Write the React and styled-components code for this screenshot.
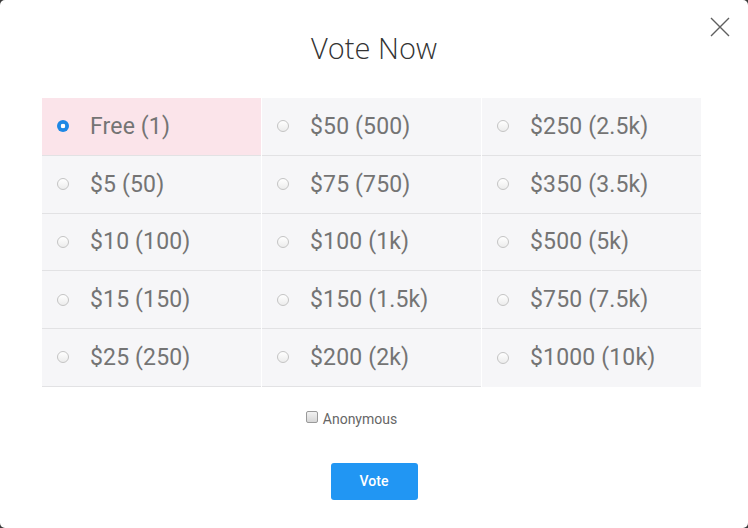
import React, { useState } from "react";
import styled, { createGlobalStyle } from "styled-components";

const GlobalStyle = createGlobalStyle`
  html, body {
    margin: 0;
    padding: 0;
    background: #3a3a3a;
  }
  * {
    box-sizing: border-box;
  }
`;

const Modal = styled.div`
  position: relative;
  width: 748px;
  height: 528px;
  background: #fff;
  border-radius: 5px;
  padding: 30px 47px 0 42px;
  font-family: Roboto, "Liberation Sans", sans-serif;
`;

const Title = styled.h2`
  margin: 0;
  height: 68px;
  text-align: center;
  font-family: "Open Sans", "Liberation Sans", sans-serif;
  font-weight: 300;
  font-size: 29px;
  line-height: 36px;
  color: #333;
  padding-left: 5px;
`;

const Close = styled.button`
  position: absolute;
  top: 16px;
  right: 17px;
  width: 22px;
  height: 22px;
  padding: 0;
  border: 0;
  background: none;
  cursor: pointer;
`;

const Grid = styled.div`
  display: grid;
  grid-template-columns: repeat(3, 219px);
  column-gap: 1px;
`;

const Column = styled.div`
  display: flex;
  flex-direction: column;
`;

const Option = styled.label`
  display: flex;
  align-items: center;
  height: 57.75px;
  padding-left: 15px;
  background: ${(p) => (p.$active ? "#fbe4ea" : "#f6f6f8")};
  border-bottom: ${(p) => (p.$last ? "0" : "1px solid #e2e2e4")};
  cursor: pointer;
`;

const Radio = styled.span`
  width: 12px;
  height: 12px;
  border-radius: 50%;
  flex: none;
  border: ${(p) => (p.$on ? "0" : "1px solid #c4c4c4")};
  background: ${(p) =>
    p.$on
      ? "radial-gradient(circle, #fff 0 2px, #1e88e5 2.6px)"
      : "linear-gradient(#fff, #ececec)"};
`;

const OptionText = styled.span`
  margin-left: 21px;
  font-size: 23px;
  color: #747474;
  letter-spacing: 0.15px;
`;

const AnonRow = styled.label`
  display: flex;
  align-items: center;
  justify-content: center;
  margin-top: 24px;
  padding-right: 40px;
  font-size: 14px;
  color: #666;
  cursor: pointer;
`;

const Check = styled.span`
  width: 12px;
  height: 12px;
  border: 1px solid #9a9a9a;
  border-radius: 2px;
  background: linear-gradient(#f2f2f2, #d6d6d6);
  margin-right: 5px;
  margin-top: -3px;
`;

const Footer = styled.div`
  display: flex;
  justify-content: center;
  margin-top: 36px;
  padding-left: 5px;
`;

const VoteButton = styled.button`
  width: 87px;
  height: 37px;
  border: 0;
  border-radius: 3px;
  background: #2196f3;
  color: #fff;
  font-family: Roboto, "Liberation Sans", sans-serif;
  font-weight: 500;
  font-size: 14px;
  cursor: pointer;
`;

const columns = [
  ["Free (1)", "$5 (50)", "$10 (100)", "$15 (150)", "$25 (250)"],
  ["$50 (500)", "$75 (750)", "$100 (1k)", "$150 (1.5k)", "$200 (2k)"],
  ["$250 (2.5k)", "$350 (3.5k)", "$500 (5k)", "$750 (7.5k)", "$1000 (10k)"],
];

const App = () => {
  const [choice, setChoice] = useState("Free (1)");
  const [anon, setAnon] = useState(false);

  return (
    <>
      <GlobalStyle />
      <Modal>
        <Close aria-label="close">
          <svg width="22" height="22" viewBox="0 0 22 22">
            <path
              d="M2 2 L20 20 M20 2 L2 20"
              stroke="#5f5f5f"
              strokeWidth="1.4"
              fill="none"
            />
          </svg>
        </Close>
        <Title>Vote Now</Title>
        <Grid>
          {columns.map((col, ci) => (
            <Column key={ci}>
              {col.map((item, i) => (
                <Option
                  key={item}
                  $active={choice === item}
                  $last={ci === 2 && i === col.length - 1}
                  onClick={() => setChoice(item)}
                >
                  <Radio $on={choice === item} />
                  <OptionText>{item}</OptionText>
                </Option>
              ))}
            </Column>
          ))}
        </Grid>
        <AnonRow onClick={() => setAnon(!anon)}>
          <Check />
          Anonymous
        </AnonRow>
        <Footer>
          <VoteButton>Vote</VoteButton>
        </Footer>
      </Modal>
    </>
  );
};

export default App;
